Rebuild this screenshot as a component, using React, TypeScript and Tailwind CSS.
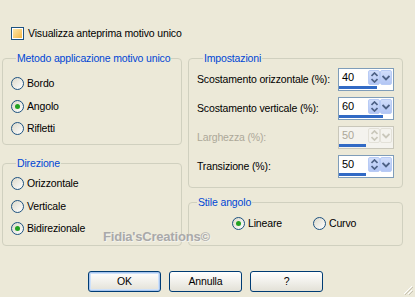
import type { ReactNode } from 'react'

const blue = 'text-[#0046D5]'

function Radio({ checked, label }: { checked?: boolean; label: string }) {
  return (
    <div className="flex items-center gap-[3px] h-[13px]">
      <span className="w-[13px] h-[13px] rounded-full border border-[#1C5180] bg-gradient-to-br from-[#DCD9CA] to-white flex items-center justify-center shrink-0">
        {checked && <span className="w-[5px] h-[5px] rounded-full bg-[#21A121]" />}
      </span>
      <span>{label}</span>
    </div>
  )
}

function Group({ title, inset = 'ml-[5px]', className, children }: { title: string; inset?: string; className?: string; children: ReactNode }) {
  return (
    <fieldset className={`border border-[#D0D0BF] rounded-[4px] ${className ?? ''}`}>
      <legend className={`${inset} px-[1px] leading-[13px] whitespace-nowrap ${blue}`}>{title}</legend>
      {children}
    </fieldset>
  )
}

function Updown({ disabled }: { disabled?: boolean }) {
  const c = disabled ? '#C9C7BA' : '#4D6185'
  return (
    <svg width="7" height="11" viewBox="0 0 7 11">
      <path d="M0.5 4 L3.5 1 L6.5 4" fill="none" stroke={c} strokeWidth="1.7" />
      <path d="M0.5 7 L3.5 10 L6.5 7" fill="none" stroke={c} strokeWidth="1.7" />
    </svg>
  )
}

function Down({ disabled }: { disabled?: boolean }) {
  const c = disabled ? '#C9C7BA' : '#4D6185'
  return (
    <svg width="8" height="6" viewBox="0 0 8 6">
      <path d="M0.5 1 L4 4.5 L7.5 1" fill="none" stroke={c} strokeWidth="1.9" />
    </svg>
  )
}

function Spin({ value, bar, disabled }: { value: string; bar: number; disabled?: boolean }) {
  const btn = disabled
    ? 'bg-[#F4F3EE] border border-[#E3E1D8]'
    : 'bg-gradient-to-b from-[#D1DEFB] to-[#B3C6F4] border border-[#B8CBF5]'
  return (
    <div
      className={`w-[56px] h-[23px] border flex flex-col shrink-0 ${
        disabled ? 'border-[#C9C7BA] bg-[#F4F3EE]' : 'border-[#7F9DB9] bg-white'
      }`}
    >
      <div className="flex items-center h-[18px] pr-[1px]">
        <span className={`flex-1 pl-[3px] text-[11px] ${disabled ? 'text-[#ACA899]' : ''}`}>{value}</span>
        <span className={`w-[12px] h-[15px] rounded-[2px] flex items-center justify-center ${btn}`}>
          <Updown disabled={disabled} />
        </span>
        <span className={`w-[12px] h-[15px] rounded-[2px] flex items-center justify-center ${btn}`}>
          <Down disabled={disabled} />
        </span>
      </div>
      <div className="h-[3px] mt-auto mb-[1px]">
        <div className="h-full bg-[#316AC5]" style={{ width: bar }} />
      </div>
    </div>
  )
}

function Row({ label, value, bar, disabled }: { label: string; value: string; bar: number; disabled?: boolean }) {
  return (
    <div className="flex items-center justify-between h-[23px]">
      <span className={`whitespace-nowrap ${disabled ? 'text-[#ACA899]' : ''}`}>{label}</span>
      <Spin value={value} bar={bar} disabled={disabled} />
    </div>
  )
}

function Button({ label, focused }: { label: string; focused?: boolean }) {
  return (
    <button
      className={`w-[73px] h-[21px] rounded-[3px] border border-[#003C74] bg-gradient-to-b from-white to-[#E3E1D7] flex items-center justify-center ${
        focused ? 'shadow-[inset_0_0_0_1px_#A6C4EE,inset_0_0_0_2px_#CEE1FA]' : ''
      }`}
    >
      {label}
    </button>
  )
}

export default function App() {
  return (
    <div
      className="relative w-[415px] h-[297px] bg-[#ECE9D8] overflow-hidden text-[10.5px] tracking-[-0.15px] leading-[13px] text-black"
      style={{ fontFamily: '"Liberation Sans", Arial, sans-serif' }}
    >
      <div className="flex items-center gap-[4px] pl-[11px] pt-[27px]">
        <span className="w-[13px] h-[13px] border border-[#1C5180] bg-white p-[1px]">
          <span className="block w-full h-full bg-gradient-to-br from-[#FCE7A8] to-[#F5B73C]" />
        </span>
        <span>Visualizza anteprima motivo unico</span>
      </div>

      <div className="flex gap-[6px] pl-[2px] mt-[12px]">
        <div className="w-[180px] flex flex-col gap-[12px]">
          <Group title="Metodo applicazione motivo unico" className="h-[93px] pl-[8px] pt-[12px]">
            <div className="flex flex-col gap-[9.5px]">
              <Radio label="Bordo" />
              <Radio label="Angolo" checked />
              <Radio label="Rifletti" />
            </div>
          </Group>
          <Group title="Direzione" className="h-[89px] pl-[8px] pt-[7px]">
            <div className="flex flex-col gap-[9.5px]">
              <Radio label="Orizzontale" />
              <Radio label="Verticale" />
              <Radio label="Bidirezionale" checked />
            </div>
          </Group>
        </div>

        <div className="w-[215px] flex flex-col gap-[8px]">
          <Group title="Impostazioni" inset="ml-[6px]" className="h-[136px] pl-[8px] pr-[8px] pt-[3px]">
            <div className="flex flex-col gap-[6px]">
              <Row label="Scostamento orizzontale (%):" value="40" bar={38} />
              <Row label="Scostamento verticale (%):" value="60" bar={44} />
              <Row label="Larghezza (%):" value="50" bar={27} disabled />
              <Row label="Transizione (%):" value="50" bar={27} />
            </div>
          </Group>
          <Group title="Stile angolo" inset="ml-[8px]" className="h-[50px] pt-[8px]">
            <div className="flex gap-[31px] pl-[43px]">
              <Radio label="Lineare" checked />
              <Radio label="Curvo" />
            </div>
          </Group>
        </div>
      </div>

      <div className="flex gap-[8px] pl-[88px] mt-[25px]">
        <Button label="OK" focused />
        <Button label="Annulla" />
        <Button label="?" />
      </div>

      <span
        className="absolute left-[103px] top-[230px] text-[13px] font-bold tracking-[-0.2px] text-[#A9A9A9] [text-shadow:1px_1px_0_#F4F3EE]"
      >
        Fidia'sCreations©
      </span>

      <svg className="absolute right-[2px] bottom-[2px]" width="10" height="10" viewBox="0 0 10 10">
        <path d="M9 1 L1 9 M9 5 L5 9" stroke="#FFFFFF" strokeWidth="1" />
        <path d="M10 2 L2 10 M10 6 L6 10" stroke="#C7C3B4" strokeWidth="1" />
      </svg>
    </div>
  )
}
